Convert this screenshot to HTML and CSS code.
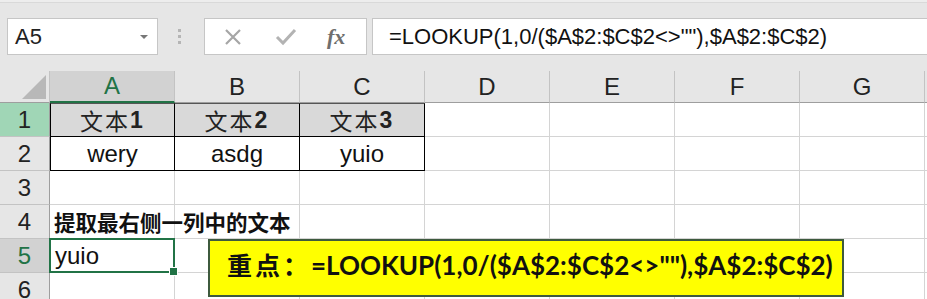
FILE: index.html
```html
<!DOCTYPE html>
<html lang="zh-CN">
<head>
    <meta charset="UTF-8">
    <title>LOOKUP 提取最右侧文本</title>
    <link rel="stylesheet" href="styles.css">
</head>
<body>
    <div class="top-strip"></div>
    <div class="formula-row">
        <div class="name-box">
            <span>A5</span>
            <span class="caret"></span>
        </div>
        <div class="grip">
            <i></i><i></i><i></i>
        </div>
        <div class="fx-buttons">
            <svg class="btn-icon" width="20" height="20" viewBox="0 0 20 20">
                <path d="M3 3 L17 17 M17 3 L3 17" stroke="#a6a6a6" stroke-width="2.2" fill="none"/>
            </svg>
            <svg class="btn-icon" width="22" height="20" viewBox="0 0 22 20">
                <path d="M2 10 L8 16 L20 3" stroke="#b3b3b3" stroke-width="3" fill="none"/>
            </svg>
            <span class="fx">fx</span>
        </div>
        <div class="formula-input">=LOOKUP(1,0/($A$2:$C$2&lt;&gt;""),$A$2:$C$2)</div>
    </div>

    <div class="sheet">
        <!-- header row -->
        <div class="corner"><span></span></div>
        <div class="col-head active">A</div>
        <div class="col-head">B</div>
        <div class="col-head">C</div>
        <div class="col-head">D</div>
        <div class="col-head">E</div>
        <div class="col-head">F</div>
        <div class="col-head">G</div>
        <div class="col-head edge"></div>

        <!-- row 1 -->
        <div class="row-head green">1</div>
        <div class="cell tb tb-left tb-top fill title">文本<b>1</b></div>
        <div class="cell tb tb-top fill title">文本<b>2</b></div>
        <div class="cell tb tb-top fill title">文本<b>3</b></div>
        <div class="cell"></div><div class="cell"></div><div class="cell"></div><div class="cell"></div><div class="cell edge"></div>

        <!-- row 2 -->
        <div class="row-head">2</div>
        <div class="cell tb tb-left center">wery</div>
        <div class="cell tb center">asdg</div>
        <div class="cell tb center">yuio</div>
        <div class="cell"></div><div class="cell"></div><div class="cell"></div><div class="cell"></div><div class="cell edge"></div>

        <!-- row 3 -->
        <div class="row-head">3</div>
        <div class="cell"></div><div class="cell"></div><div class="cell"></div><div class="cell"></div><div class="cell"></div><div class="cell"></div><div class="cell"></div><div class="cell edge"></div>

        <!-- row 4 -->
        <div class="row-head">4</div>
        <div class="cell note">提取最右侧一列中的文本</div>
        <div class="cell"></div><div class="cell"></div><div class="cell"></div><div class="cell"></div><div class="cell"></div><div class="cell"></div><div class="cell edge"></div>

        <!-- row 5 -->
        <div class="row-head active">5</div>
        <div class="cell selected">yuio</div>
        <div class="cell"></div><div class="cell"></div><div class="cell"></div><div class="cell"></div><div class="cell"></div><div class="cell"></div><div class="cell edge"></div>

        <!-- row 6 -->
        <div class="row-head">6</div>
        <div class="cell"></div><div class="cell"></div><div class="cell"></div><div class="cell"></div><div class="cell"></div><div class="cell"></div><div class="cell"></div><div class="cell edge"></div>

        <div class="callout"><span class="key">重点：</span>=LOOKUP(1,0/($A$2:$C$2&lt;&gt;""),$A$2:$C$2)</div>
    </div>
</body>
</html>
```

FILE: styles.css
```css
* {
    margin: 0;
    padding: 0;
    box-sizing: border-box;
}

body {
    width: 927px;
    height: 299px;
    overflow: hidden;
    background: #e6e6e6;
    font-family: 'Liberation Sans', Arial, sans-serif;
    color: #111;
}

.top-strip {
    height: 3px;
    background: #ededed;
    border-bottom: 1px solid #d9d9d9;
}

.formula-row {
    display: flex;
    align-items: flex-start;
    height: 68px;
    padding-top: 15px;
}

.name-box {
    display: flex;
    align-items: center;
    justify-content: space-between;
    width: 151px;
    height: 37px;
    margin-left: 7px;
    padding: 0 9px 0 7px;
    background: #fff;
    border: 1px solid #c6c6c6;
    font-size: 22px;
    color: #222;
}

.caret {
    width: 0;
    height: 0;
    border-left: 4px solid transparent;
    border-right: 4px solid transparent;
    border-top: 4px solid #777;
}

.grip {
    display: flex;
    flex-direction: column;
    gap: 3px;
    width: 46px;
    padding: 11px 0 0 20px;
}

.grip i {
    width: 3px;
    height: 3px;
    background: #b5b5b5;
}

.fx-buttons {
    display: flex;
    align-items: center;
    width: 163px;
    height: 37px;
    background: #fff;
    border: 1px solid #c6c6c6;
    padding-left: 18px;
}

.btn-icon:first-of-type {
    margin-right: 32px;
}

.fx {
    margin-left: 30px;
    font-family: 'Liberation Serif', 'Times New Roman', serif;
    font-style: italic;
    font-weight: bold;
    font-size: 22px;
    color: #6e6e6e;
}

.formula-input {
    flex: 1;
    height: 37px;
    margin-left: 5px;
    padding: 5px 0 0 16px;
    background: #fff;
    border: 1px solid #c6c6c6;
    border-right: none;
    font-size: 22px;
    color: #111;
}

.sheet {
    position: relative;
    display: grid;
    grid-template-columns: 50px repeat(7, 125px) 2px;
    grid-template-rows: 32px repeat(6, 34px);
    background: #fff;
}

.corner {
    position: relative;
    background: #e6e6e6;
    border-right: 1px solid #c3c3c3;
    border-bottom: 1px solid #9e9e9e;
}

.corner span {
    position: absolute;
    right: 3px;
    bottom: 3px;
    width: 0;
    height: 0;
    border-left: 24px solid transparent;
    border-bottom: 24px solid #b8b8b8;
}

.col-head {
    display: flex;
    align-items: center;
    justify-content: center;
    background: #e6e6e6;
    border-right: 1px solid #c3c3c3;
    border-bottom: 1px solid #9e9e9e;
    font-size: 24px;
    color: #222;
}

.col-head.active {
    background: #d2d2d2;
    color: #217346;
    border-bottom: 2px solid #217346;
}

.row-head {
    display: flex;
    align-items: center;
    justify-content: center;
    background: #e6e6e6;
    border-right: 1px solid #9e9e9e;
    border-bottom: 1px solid #c3c3c3;
    font-size: 24px;
    color: #222;
}

.row-head.green {
    background: #a0d6b6;
}

.row-head.active {
    background: #d2d2d2;
    color: #217346;
}

.cell {
    display: flex;
    align-items: center;
    border-right: 1px solid #d4d4d4;
    border-bottom: 1px solid #d4d4d4;
    font-size: 24px;
    white-space: nowrap;
}

.edge {
    border-right: none;
    background: #fff;
}

.col-head.edge {
    background: #e6e6e6;
}

.center {
    justify-content: center;
}

.tb {
    border-right: 1px solid #000;
    border-bottom: 1px solid #000;
    justify-content: center;
}

.tb-left {
    border-left: 1px solid #000;
}

.tb-top {
    border-top: 1px solid #555;
}

.fill {
    background: #d9d9d9;
}

.title {
    font-family: 'Noto Sans CJK SC', sans-serif;
    font-size: 23px;
    letter-spacing: 2px;
    color: #222;
}

.title b {
    font-family: 'Liberation Sans', Arial, sans-serif;
    font-size: 23px;
}

.note {
    padding-left: 4px;
    font-family: 'Noto Sans CJK SC', sans-serif;
    font-weight: bold;
    font-size: 21.5px;
    overflow: visible;
    color: #111;
}

.selected {
    position: relative;
    padding-left: 5px;
}

.selected::before {
    content: '';
    position: absolute;
    top: -1px;
    left: -1px;
    right: -1px;
    bottom: -1px;
    border: 2px solid #217346;
}

.selected::after {
    content: '';
    position: absolute;
    right: -4px;
    bottom: -4px;
    width: 7px;
    height: 7px;
    background: #217346;
    border: 1px solid #fff;
}

.callout {
    position: absolute;
    left: 208px;
    top: 168px;
    width: 636px;
    height: 58px;
    padding: 5px 0 0 17px;
    background: #ffff00;
    border: 2px solid #3e5a3e;
    font-family: Lato, 'Noto Sans CJK SC', sans-serif;
    font-weight: bold;
    font-size: 26px;
    color: #111;
    white-space: nowrap;
}

.callout .key {
    font-size: 25px;
    letter-spacing: 3px;
}
```
